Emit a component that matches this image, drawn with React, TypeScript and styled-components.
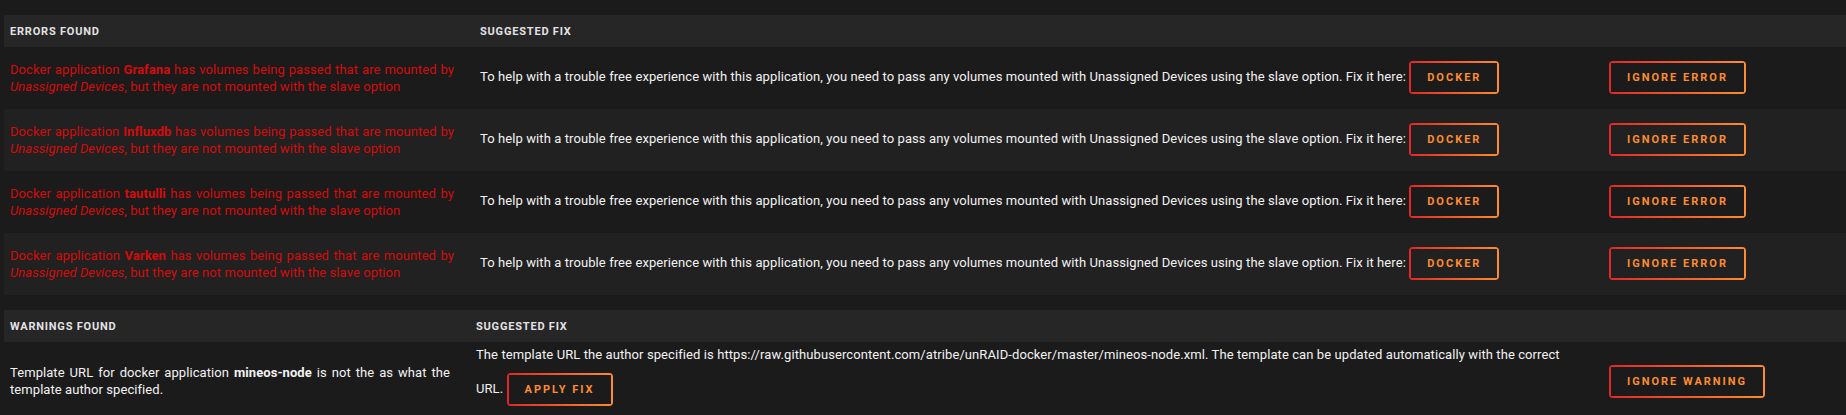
import React from "react";
import styled, { createGlobalStyle } from "styled-components";

const GlobalStyle = createGlobalStyle`
  html, body {
    margin: 0;
    padding: 0;
    background: #1c1b1b;
  }
  body {
    color: #f2f2f2;
    font-family: Roboto, "Liberation Sans", Arial, sans-serif;
    font-size: 13px;
  }
`;

const Page = styled.div`
  padding: 15px 0 0 4px;
  display: flex;
  flex-direction: column;
  gap: 15px;
`;

const Table = styled.table`
  width: 100%;
  border-collapse: collapse;
  border-spacing: 0;
  table-layout: fixed;
`;

const Col = styled.col<{ $w?: number }>`
  width: ${(p) => (p.$w ? `${p.$w}px` : "auto")};
`;

const HeadRow = styled.tr`
  background: #262626;
`;

const HeadCell = styled.th`
  height: 32px;
  padding: 0 20px 0 6px;
  text-align: left;
  vertical-align: middle;
  font-size: 11px;
  font-weight: bold;
  letter-spacing: 0.8px;
  text-transform: uppercase;
  color: #e4e2e4;
`;

const Row = styled.tr`
  background: #1c1b1b;
  &:nth-child(even) {
    background: #212121;
  }
`;

const Cell = styled.td`
  padding: 4px 20px 5px 6px;
  vertical-align: middle;
  line-height: 17px;
  letter-spacing: 0.09px;
`;

const MessageCell = styled(Cell)<{ $error?: boolean }>`
  text-align: justify;
  letter-spacing: 0.07px;
  color: ${(p) => (p.$error ? "#d40b0b" : "#f2f2f2")};
`;

const Name = styled.b`
  font-weight: bold;
`;

const Plugin = styled.i`
  font-style: italic;
`;

const KeepTogether = styled.span`
  white-space: nowrap;
`;

const FixButton = styled.button`
  display: inline-block;
  vertical-align: middle;
  margin: 10px 12px 10px 0;
  padding: 9px 18px;
  height: 33px;
  box-sizing: border-box;
  font-family: Roboto, "Liberation Sans", Arial, sans-serif;
  font-size: 11px;
  line-height: 15px;
  font-weight: bold;
  letter-spacing: 2px;
  text-transform: uppercase;
  white-space: nowrap;
  color: #ff8c2f;
  border: 0;
  border-radius: 4px;
  cursor: pointer;
  background:
    linear-gradient(90deg, #e22828 0, #ff8c2f) 0 0 no-repeat,
    linear-gradient(90deg, #e22828 0, #ff8c2f) 0 100% no-repeat,
    linear-gradient(0deg, #e22828, #e22828) 0 100% no-repeat,
    linear-gradient(0deg, #ff8c2f, #ff8c2f) 100% 100% no-repeat;
  background-size: 100% 2px, 100% 2px, 2px 100%, 2px 100%;
`;

const errorApps = ["Grafana", "Influxdb", "tautulli", "Varken"];

export default function App() {
  return (
    <>
      <GlobalStyle />
      <Page>
        <Table>
          <colgroup>
            <Col $w={470} />
            <Col $w={1129} />
            <Col />
          </colgroup>
          <thead>
            <HeadRow>
              <HeadCell>Errors Found</HeadCell>
              <HeadCell>Suggested Fix</HeadCell>
              <HeadCell />
            </HeadRow>
          </thead>
          <tbody>
            {errorApps.map((name) => (
              <Row key={name}>
                <MessageCell $error>
                  Docker application <Name>{name}</Name> has volumes being passed that are mounted by{" "}
                  <Plugin>Unassigned Devices</Plugin>, but they are not mounted with the slave option
                </MessageCell>
                <Cell>
                  To help with a trouble free experience with this application, you need to pass any volumes mounted
                  with Unassigned Devices using the slave option. Fix it here: <FixButton>Docker</FixButton>
                </Cell>
                <Cell>
                  <FixButton>Ignore Error</FixButton>
                </Cell>
              </Row>
            ))}
          </tbody>
        </Table>
        <Table>
          <colgroup>
            <Col $w={466} />
            <Col $w={1133} />
            <Col />
          </colgroup>
          <thead>
            <HeadRow>
              <HeadCell>Warnings Found</HeadCell>
              <HeadCell>Suggested Fix</HeadCell>
              <HeadCell />
            </HeadRow>
          </thead>
          <tbody>
            <Row>
              <MessageCell>
                Template URL for docker application <Name>mineos-node</Name> is not the as what the template author
                specified.
              </MessageCell>
              <Cell>
                The template URL the author specified is
                https://raw.githubusercontent.com/atribe/unRAID-docker/master/mineos-node.xml. The template can be
                updated automatically with the correct{" "}
                <KeepTogether>
                  URL. <FixButton>Apply Fix</FixButton>
                </KeepTogether>
              </Cell>
              <Cell>
                <FixButton>Ignore Warning</FixButton>
              </Cell>
            </Row>
          </tbody>
        </Table>
      </Page>
    </>
  );
}
